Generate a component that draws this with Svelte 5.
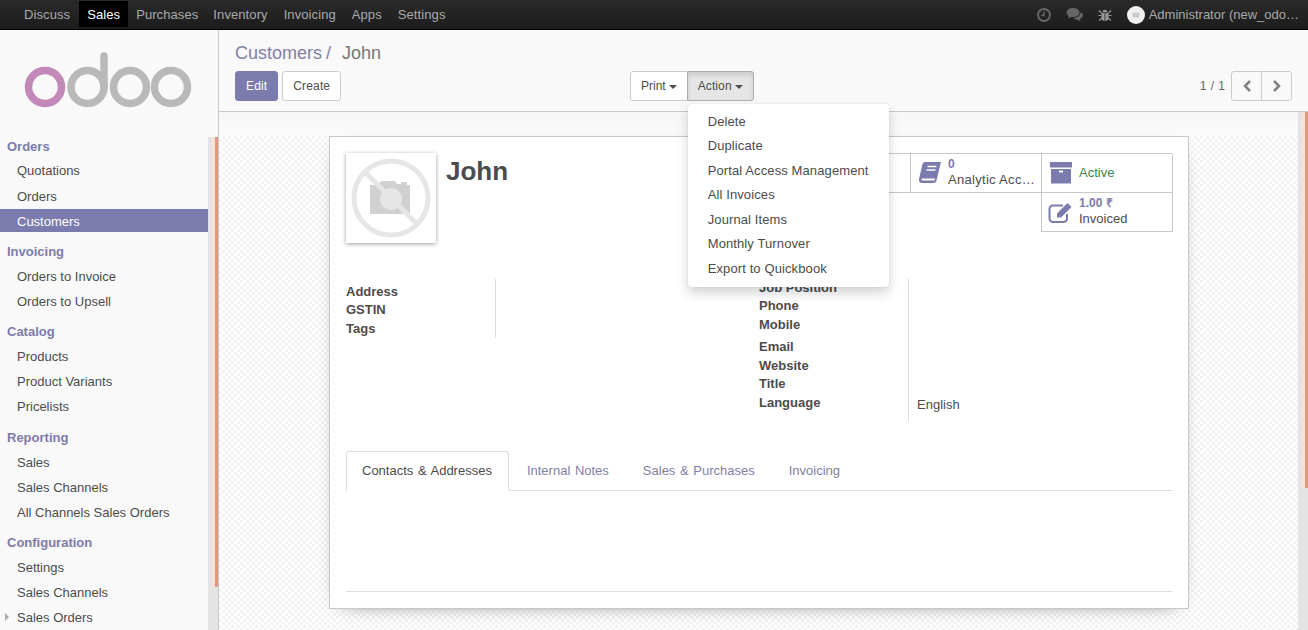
<script>
  const topMenu = ["Discuss", "Sales", "Purchases", "Inventory", "Invoicing", "Apps", "Settings"];
  const sections = [
    { title: "Orders", items: ["Quotations", "Orders", "Customers"] },
    { title: "Invoicing", items: ["Orders to Invoice", "Orders to Upsell"] },
    { title: "Catalog", items: ["Products", "Product Variants", "Pricelists"] },
    { title: "Reporting", items: ["Sales", "Sales Channels", "All Channels Sales Orders"] },
    { title: "Configuration", items: ["Settings", "Sales Channels", "Sales Orders"] },
  ];
  const actions = [
    "Delete",
    "Duplicate",
    "Portal Access Management",
    "All Invoices",
    "Journal Items",
    "Monthly Turnover",
    "Export to Quickbook",
  ];
  const tabs = ["Contacts & Addresses", "Internal Notes", "Sales & Purchases", "Invoicing"];
  const leftLabels = ["Address", "GSTIN", "Tags"];
  const rightLabels = ["Job Position", "Phone", "Mobile", "Email", "Website", "Title", "Language"];
</script>

<div class="page">
  <header class="topbar">
    <nav class="apps">
      {#each topMenu as name}
        <a class:current={name === "Sales"}>{name}</a>
      {/each}
    </nav>
    <div class="systray">
      <svg class="tray clock" width="16" height="16" viewBox="0 0 16 16">
        <circle cx="8" cy="8" r="6" fill="none" stroke="#666" stroke-width="2" />
        <path d="M8 4.5V8.5H5" fill="none" stroke="#666" stroke-width="1.5" />
      </svg>
      <svg class="tray chat" width="18" height="15" viewBox="0 0 18 15">
        <path d="M7 1C3.2 1 .5 3 .5 5.5c0 1.500 1 2.800 2.400 3.600L2 11.500l3-1.600c.6.100 1.300.200 2 .200 3.800 0 6.500-2 6.500-4.600S10.800 1 7 1z" fill="#666" />
        <path d="M14.500 5c.3 2.900-2.500 5.800-7 6 .8 1 2.200 1.500 3.500 1.500l3.500 2-.8-2.600c2-.8 3.300-2.100 3.300-3.600 0-1.400-1-2.500-2.500-3.300z" fill="#666" />
      </svg>
      <svg class="tray bug" width="14" height="14" viewBox="0 0 14 14">
        <path d="M4.500 4.200a2.500 2.500 0 0 1 5 0z" fill="#999" />
        <path d="M3.500 5h7v4.500a3.500 3.500 0 0 1-7 0z" fill="#999" />
        <path d="M1 2.500 3.500 5M13 2.500 10.500 5M.5 7.500h3M13.500 7.500h-3M1 12.500l3-2.500M13 12.500l-3-2.500" stroke="#999" stroke-width="1.200" />
        <path d="M7 5v8" stroke="#222" stroke-width=".8" />
      </svg>
      <span class="me">
        <svg class="me-pic" width="18" height="18" viewBox="0 0 18 18">
          <circle cx="9" cy="9" r="9" fill="#f1f1f1" />
          <rect x="5.500" y="6.500" width="7" height="5" fill="#ccc" />
        </svg>
        <span class="me-name">Administrator (new_odo…</span>
      </span>
    </div>
  </header>

  <div class="body">
    <aside class="sidebar">
      <div class="logo">
        <svg width="168" height="62" viewBox="0 0 168 62">
          <circle cx="21" cy="41" r="16.500" fill="none" stroke="#c288b8" stroke-width="7.500" />
          <circle cx="63.500" cy="41" r="16.500" fill="none" stroke="#b9b9b9" stroke-width="7.500" />
          <path d="M80 41V10" fill="none" stroke="#b9b9b9" stroke-width="7.500" stroke-linecap="round" />
          <circle cx="106" cy="41" r="16.500" fill="none" stroke="#b9b9b9" stroke-width="7.500" />
          <circle cx="147" cy="41" r="16.500" fill="none" stroke="#b9b9b9" stroke-width="7.500" />
        </svg>
      </div>
      <div class="side-scroll">
        <div class="menu">
          {#each sections as section}
            <div class="menu-title" class:late={section.title === "Reporting"}>{section.title}</div>
            {#each section.items as item}
              <div class="menu-row">
                <a class="menu-item" class:active={item === "Customers"}>
                  {#if item === "Sales Orders"}<span class="arrow"></span>{/if}{item}
                </a>
              </div>
            {/each}
          {/each}
        </div>
        <div class="vbar side-bar"><div class="thumb"></div></div>
      </div>
    </aside>

    <main class="main">
      <section class="panel">
        <h1 class="crumbs"><span class="crumb-link">Customers</span><span class="crumb-sep">/</span>John</h1>
        <div class="panel-row">
          <div class="panel-left">
            <button class="btn primary">Edit</button>
            <button class="btn">Create</button>
          </div>
          <div class="panel-mid">
            <button class="btn joined-l">Print<span class="caret"></span></button>
            <div class="action-wrap">
              <button class="btn joined-r open">Action<span class="caret"></span></button>
              <ul class="dropdown">
                {#each actions as action}
                  <li>{action}</li>
                {/each}
              </ul>
            </div>
          </div>
          <div class="panel-right">
            <span class="pager">1 / 1</span>
            <button class="btn page-btn joined-l">
              <svg width="12" height="14" viewBox="0 0 12 14"><path d="M9 2 4 7l5 5" fill="none" stroke="#808080" stroke-width="2.500" /></svg>
            </button>
            <button class="btn page-btn joined-r">
              <svg width="12" height="14" viewBox="0 0 12 14"><path d="m3 2 5 5-5 5" fill="none" stroke="#808080" stroke-width="2.500" /></svg>
            </button>
          </div>
        </div>
      </section>

      <div class="content">
        <div class="form-scroll">
          <div class="status-strip"></div>
          <div class="sheet-bg">
            <div class="sheet">
              <div class="head">
                <div class="identity">
                  <svg class="avatar" width="90" height="90" viewBox="0 0 90 90">
                    <circle cx="45" cy="45" r="37" fill="none" stroke="#e6e6e6" stroke-width="5" />
                    <path d="M24 32h8l3-4h14l2 3h4v-2h6v3h3v29H24z" fill="#d0d0d0" />
                    <circle cx="45" cy="46" r="11" fill="#e6e6e6" />
                    <path d="M19 19 71 71" stroke="#e6e6e6" stroke-width="5" />
                  </svg>
                  <div class="name">John</div>
                </div>
                <div class="stats">
                  <div class="stat"></div>
                  <div class="stat">
                    <svg class="stat-icon" width="24" height="24" viewBox="0 0 24 24">
                      <path d="M7 1h16l-4.500 18.500c-.3 1.500-1.300 2.500-3 2.500H4c-2 0-3.500-1.700-3-4L4.500 3C5 1.700 5.800 1 7 1z" fill="#7c7bad" />
                      <path d="M3.800 17.500H17l-.5 2H4.500c-1 0-1.200-1.500-.7-2z" fill="#fff" />
                      <path d="M9.500 5.500h9M8.500 9h9" stroke="#fff" stroke-width="1.500" />
                    </svg>
                    <div class="stat-text"><b>0</b><span class="clipped">Analytic Acc…</span></div>
                  </div>
                  <div class="stat">
                    <svg class="stat-icon" width="24" height="24" viewBox="0 0 24 24">
                      <path d="M1 1h22v5.500H1z" fill="#7c7bad" />
                      <path d="M2 8h20v14.500H2z" fill="#7c7bad" />
                      <path d="M10 10.500h4" stroke="#fff" stroke-width="2" />
                    </svg>
                    <div class="stat-text"><span class="active-label">Active</span></div>
                  </div>
                  <div class="stat wide-gap"></div>
                  <div class="stat wide-gap"></div>
                  <div class="stat">
                    <svg class="stat-icon" width="26" height="24" viewBox="0 0 26 24">
                      <path d="M19 14v4.500a3.500 3.500 0 0 1-3.500 3.500H5a3.500 3.500 0 0 1-3.500-3.500V9A3.500 3.500 0 0 1 5 5.500h10" fill="none" stroke="#7c7bad" stroke-width="2" />
                      <path d="M9 13.500 19.500 3l4 4L13 17.500H9z" fill="#7c7bad" />
                    </svg>
                    <div class="stat-text"><b>1.00 ₹</b><span>Invoiced</span></div>
                  </div>
                </div>
              </div>

              <div class="fields">
                <div class="group left-group">
                  <div class="labels">
                    {#each leftLabels as label}<div>{label}</div>{/each}
                  </div>
                  <div class="values"></div>
                </div>
                <div class="group right-group">
                  <div class="labels right-labels">
                    {#each rightLabels as label}<div>{label}</div>{/each}
                  </div>
                  <div class="values"><span class="value">English</span></div>
                </div>
              </div>

              <div class="tabs">
                {#each tabs as tab, i}
                  <a class="tab" class:selected={i === 0}>{tab}</a>
                {/each}
              </div>
              <div class="tab-pane"></div>
            </div>
          </div>
        </div>
        <div class="vbar main-bar"><div class="thumb"></div></div>
      </div>
    </main>
  </div>
</div>

<style>
  :global(body) {
    margin: 0;
  }

  .page {
    height: 630px;
    overflow: hidden;
    display: flex;
    flex-direction: column;
    font-family: "Liberation Sans", Arial, sans-serif;
    font-size: 13px;
    color: #4c4c4c;
    background: #fff;
  }

  .topbar {
    height: 29px;
    flex: none;
    display: flex;
    justify-content: space-between;
    background: linear-gradient(#2a2a2a, #1c1c1c);
    border-bottom: 1px solid #000;
  }

  .apps {
    display: flex;
    padding: 1px 0 0 16px;
    height: 26px;
    letter-spacing: 0.09px;
  }

  .apps a {
    padding: 0 8px;
    line-height: 27px;
    color: #aaa;
  }

  .apps a:first-child {
    padding-right: 9px;
  }

  .apps a:nth-child(3) {
    padding-right: 7px;
  }

  .apps a.current {
    background: #000;
    color: #fff;
  }

  .systray {
    display: flex;
    align-items: center;
    padding-right: 9px;
  }

  .tray {
    display: block;
  }

  .clock {
    margin-right: 14px;
  }

  .chat {
    margin-right: 14px;
  }

  .bug {
    margin-right: 15px;
  }

  .me {
    display: flex;
    align-items: center;
    gap: 4px;
    color: #aaa;
  }

  .body {
    flex: 1;
    display: flex;
    min-height: 0;
  }

  .sidebar {
    width: 218px;
    flex: none;
    display: flex;
    flex-direction: column;
    background: #f9f9f9;
    border-right: 1px solid #c8c8c8;
  }

  .logo {
    height: 107px;
    flex: none;
    box-sizing: border-box;
    padding: 16px 0 0 24px;
  }

  .logo svg {
    display: block;
  }

  .side-scroll {
    flex: 1;
    display: flex;
    min-height: 0;
  }

  .menu {
    width: 208px;
    flex: none;
    margin-top: -1px;
  }

  .menu-title {
    height: 21px;
    line-height: 21px;
    margin: 7px 0 2px;
    padding-left: 7px;
    font-weight: bold;
    color: #7c7bad;
  }

  .menu-title:first-child {
    margin: 0 0 2px;
  }

  .menu-title:first-child + .menu-row {
    margin-top: -1px;
    height: 26px;
  }

  .menu-title.late {
    margin-top: 8px;
  }

  .menu-row {
    height: 25px;
  }

  .menu-item {
    display: block;
    position: relative;
    height: 23px;
    line-height: 25px;
    padding-left: 17px;
  }

  .menu-item.active {
    background: #7c7bad;
    color: #fff;
  }

  .arrow {
    position: absolute;
    left: 5px;
    top: 8px;
    border-left: 4px solid #aaa;
    border-top: 4px solid transparent;
    border-bottom: 4px solid transparent;
  }

  .vbar {
    width: 10px;
    flex: none;
    background: #e4e4e4;
  }

  .thumb {
    background: linear-gradient(90deg, #e2e2e8 0 30%, #f6e2da 30% 70%, #dc9a80 70%);
  }

  .side-bar .thumb {
    height: 450px;
  }

  .main-bar .thumb {
    height: 376px;
  }

  .main {
    flex: 1;
    min-width: 0;
    display: flex;
    flex-direction: column;
  }

  .panel {
    height: 82px;
    flex: none;
    box-sizing: border-box;
    padding: 12px 16px 0;
    background: #f9f9f9;
    border-bottom: 1px solid #c8c8c8;
  }

  .crumbs {
    margin: 0 0 6px;
    font-size: 18px;
    font-weight: normal;
    line-height: 23px;
    color: #777;
  }

  .crumb-link {
    color: #8180a8;
  }

  .crumb-sep {
    color: #8180a8;
    margin: 0 11px 0 4px;
  }

  .panel-row {
    display: grid;
    grid-template-columns: 395px 1fr auto;
  }

  .panel-left,
  .panel-mid,
  .panel-right {
    display: flex;
    align-items: center;
  }

  .panel-left {
    gap: 4px;
  }

  .btn {
    height: 30px;
    box-sizing: border-box;
    padding: 0 10px;
    font: inherit;
    font-size: 12px;
    letter-spacing: 0.15px;
    color: #4c4c4c;
    background: #fff;
    border: 1px solid #ccc;
    border-radius: 3px;
  }

  .btn.primary {
    background: #7c7bad;
    border-color: #7c7bad;
    color: #fff;
  }

  .joined-l {
    border-radius: 3px 0 0 3px;
    letter-spacing: 0;
  }

  .joined-r {
    border-radius: 0 3px 3px 0;
    margin-left: -1px;
  }

  .btn.open {
    width: 67px;
    padding: 0;
    letter-spacing: 0.1px;
    background: #e6e6e6;
    border-color: #adadad;
    box-shadow: inset 0 3px 5px rgba(0, 0, 0, 0.125);
  }

  .caret {
    display: inline-block;
    margin-left: 3px;
    vertical-align: middle;
    border-top: 4px solid #4c4c4c;
    border-left: 4px solid transparent;
    border-right: 4px solid transparent;
  }

  .action-wrap {
    position: relative;
  }

  .dropdown {
    position: absolute;
    z-index: 5;
    top: 33px;
    left: 0;
    width: 201px;
    box-sizing: border-box;
    margin: 0;
    padding: 5.5px 0 6px;
    list-style: none;
    background: #fff;
    border-radius: 3px;
    letter-spacing: 0.11px;
    box-shadow: 0 6px 12px rgba(0, 0, 0, 0.175), 0 0 1px rgba(0, 0, 0, 0.2);
  }

  .dropdown li {
    height: 24.5px;
    line-height: 24.5px;
    padding: 0 20px;
    white-space: nowrap;
  }

  .pager {
    margin-right: 6px;
    font-size: 12px;
    word-spacing: 1px;
    color: #666;
  }

  .page-btn {
    width: 31px;
    padding: 0;
    display: flex;
    align-items: center;
    justify-content: center;
    background: #f9f9f9;
  }

  .content {
    flex: 1;
    min-height: 0;
    display: flex;
  }

  .form-scroll {
    flex: 1;
    min-width: 0;
    display: flex;
    flex-direction: column;
  }

  .status-strip {
    height: 24px;
    flex: none;
    background: linear-gradient(#f6f6f6, #fbfbfb);
  }

  .sheet-bg {
    flex: 1;
    background: repeating-conic-gradient(#f3f3f3 0 25%, #fff 0 50%) 0 0 / 6px 6px;
  }

  .sheet {
    width: 860px;
    height: 473px;
    box-sizing: border-box;
    margin: 0 0 0 110px;
    padding: 16px 16px 0;
    background: #fff;
    border: 1px solid #c8c8c8;
    box-shadow: 0 5px 20px -15px #000;
  }

  .head {
    display: flex;
    justify-content: space-between;
    height: 126px;
  }

  .identity {
    display: flex;
    align-items: flex-start;
  }

  .avatar {
    display: block;
    background: #fff;
    box-shadow: 0 1px 4px rgba(0, 0, 0, 0.4);
  }

  .name {
    margin-left: 10px;
    font-size: 26px;
    font-weight: bold;
    line-height: 36px;
  }

  .stats {
    display: grid;
    grid-template-columns: repeat(3, 131px);
    grid-auto-rows: 39px;
    height: 79px;
    border-top: 1px solid #c8c8c8;
  }

  .stat {
    display: flex;
    align-items: center;
    box-sizing: border-box;
    border-left: 1px solid #c8c8c8;
    border-bottom: 1px solid #c8c8c8;
  }

  .stat:nth-child(3),
  .stat:nth-child(6) {
    border-right: 1px solid #c8c8c8;
    width: 132px;
  }

  .wide-gap {
    border: 0;
  }

  .stat-icon {
    flex: none;
    margin-left: 7px;
    margin-right: 6px;
  }

  .stat:nth-child(6) .stat-icon {
    margin-left: 6px;
    margin-right: 5px;
  }

  .stat-text {
    display: flex;
    flex-direction: column;
    margin-top: -2px;
    line-height: 15px;
    white-space: nowrap;
  }

  .stat-text b {
    font-size: 12px;
    color: #7c7bad;
  }

  .clipped {
    letter-spacing: 0.3px;
  }

  .active-label {
    color: #3f8050;
  }

  .fields {
    display: grid;
    grid-template-columns: 413px 1fr;
    height: 172px;
  }

  .group {
    display: flex;
    align-items: flex-start;
  }

  .right-group {
    align-self: start;
    height: 142px;
  }

  .labels {
    width: 149px;
    flex: none;
    font-weight: bold;
    line-height: 18px;
  }

  .left-group .labels {
    display: grid;
    grid-template-rows: 18px 19px 18px;
    padding-top: 4px;
  }

  .right-labels {
    display: grid;
    grid-template-rows: 18px 19px 22px 19px 18px 19px 27px;
  }

  .values {
    align-self: stretch;
    display: flex;
    flex-direction: column;
    justify-content: flex-end;
    box-sizing: border-box;
    padding: 0 0 7px 8px;
    line-height: 18px;
    border-left: 1px solid #ddd;
  }

  .left-group .values {
    align-self: flex-start;
    height: 59px;
  }

  .tabs {
    display: flex;
    height: 40px;
    box-sizing: border-box;
    border-bottom: 1px solid #ddd;
    word-spacing: 1px;
  }

  .tab {
    height: 39px;
    box-sizing: border-box;
    padding: 0 15px;
    margin-right: 2px;
    line-height: 38px;
    color: #8180a8;
    border: 1px solid transparent;
  }

  .tab.selected {
    height: 40px;
    padding-right: 16px;
    color: #4c4c4c;
    background: #fff;
    border-color: #ddd #ddd #fff;
    border-radius: 3px 3px 0 0;
  }

  .tab-pane {
    height: 100px;
    border-bottom: 1px solid #ddd;
  }
</style>
